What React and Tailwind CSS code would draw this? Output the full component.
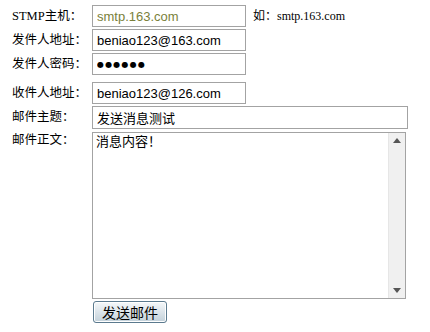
import React from 'react';

const labelFont = { fontFamily: '"Liberation Serif", "Noto Sans CJK SC", serif' };

const Row = ({ label, children, className = '' }) => (
    <div className={`flex items-center ${className}`}>
        <div className="w-[92px] pl-[12px] text-[12.5px] text-black leading-none" style={labelFont}>{label}</div>
        {children}
    </div>
);

const inputCls = 'h-[22px] border border-[#a3a3a3] bg-white px-[4px] outline-none font-["Liberation_Sans","Noto_Sans_CJK_SC",sans-serif]';

const App = () => {
    return (
        <div className="w-[430px] h-[332px] bg-white pt-[5px]">
            <Row label="STMP主机：">
                <input className={`${inputCls} w-[154px] text-[13px] text-[#7a7f3a]`} defaultValue="smtp.163.com" />
                <span className="ml-[7px] text-[12px] text-black" style={labelFont}>如：smtp.163.com</span>
            </Row>
            <Row label="发件人地址：" className="mt-[2px]">
                <input className={`${inputCls} w-[154px] text-[13px] text-black`} defaultValue="beniao123@163.com" />
            </Row>
            <Row label="发件人密码：" className="mt-[2px]">
                <input readOnly className={`${inputCls} w-[154px] text-[8px] tracking-[1.2px] text-black font-['DejaVu_Sans',sans-serif]`} value="●●●●●●" />
            </Row>
            <Row label="收件人地址：" className="mt-[7px]">
                <input className={`${inputCls} w-[154px] text-[13px] text-black`} defaultValue="beniao123@126.com" />
            </Row>
            <Row label="邮件主题：" className="mt-[2px]">
                <input className={`${inputCls} w-[316px] h-[23px] text-[13px] text-black`} defaultValue="发送消息测试" />
            </Row>
            <div className="flex items-start mt-[3px]">
                <div className="w-[92px] pl-[12px] pt-[2px] text-[12.5px] text-black leading-none" style={labelFont}>邮件正文：</div>
                <div className="flex w-[314px] h-[167px] border border-[#a3a3a3] bg-white">
                    <textarea
                        className="flex-1 resize-none border-0 outline-none px-[3px] pt-[1px] text-[13px] text-black leading-[16px] font-['Liberation_Sans','Noto_Sans_CJK_SC',sans-serif]"
                        defaultValue="消息内容！"
                    />
                    <div className="w-[17px] h-full bg-[#f0f0f0] border-l border-[#e6e6e6] flex flex-col justify-between items-center py-[5px]">
                        <svg width="8" height="5" viewBox="0 0 8 5"><path d="M0 5 L4 0 L8 5 Z" fill="#555" /></svg>
                        <svg width="8" height="5" viewBox="0 0 8 5"><path d="M0 0 L4 5 L8 0 Z" fill="#555" /></svg>
                    </div>
                </div>
            </div>
            <div className="pl-[93px] mt-[1px]">
                <button
                    type="button"
                    className="w-[74px] h-[22px] rounded-[3px] border border-[#5b7a8e] bg-gradient-to-b from-[#f5f8fa] to-[#c3d1da] text-[14px] text-black leading-none font-['Noto_Sans_CJK_SC',sans-serif] shadow-[inset_0_0_0_1px_#ffffff]"
                >
                    发送邮件
                </button>
            </div>
        </div>
    );
};

export default App;
